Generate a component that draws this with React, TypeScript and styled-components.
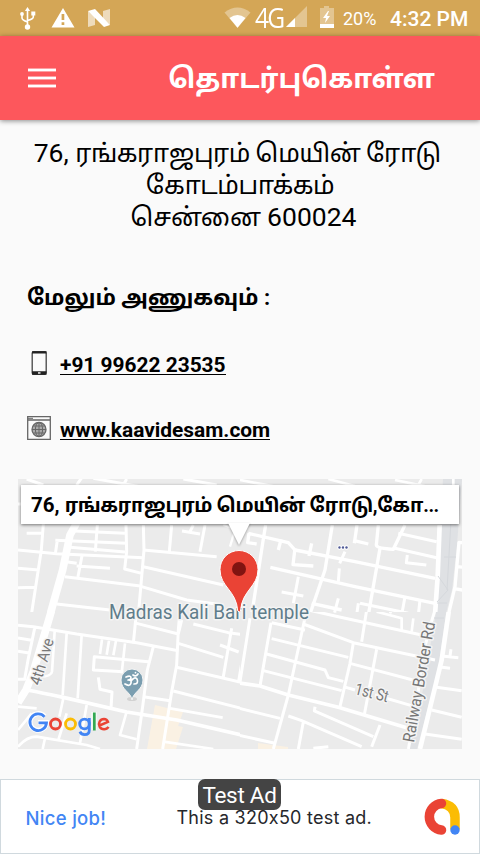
import React from "react";
import styled, { createGlobalStyle } from "styled-components";

const GlobalStyle = createGlobalStyle`
  * { box-sizing: border-box; }
  html, body { margin: 0; padding: 0; background: #fafafa; }
  body { font-family: Roboto, "Noto Sans Tamil", "Noto Sans", sans-serif; color: #000; overflow: hidden; }
`;

const Screen = styled.div`
  width: 480px;
  height: 854px;
  display: flex;
  flex-direction: column;
  background: #fafafa;
  overflow: hidden;
`;

const StatusBar = styled.header`
  flex: none;
  height: 36px;
  display: flex;
  align-items: center;
  background: #d4a656;
  color: #fff;
  line-height: 36px;
  white-space: nowrap;
`;

const StatusIcons = styled.svg<{ $w: number }>`
  flex: none;
  display: block;
  width: ${(p) => p.$w}px;
  height: 36px;
`;

const Spacer = styled.div`
  flex: 1;
`;

const Network = styled.span`
  width: 31px;
  font: 400 26.5px/36px "Open Sans", sans-serif;
  letter-spacing: -2px;
  transform: scaleX(0.93);
  transform-origin: left;
`;

const Battery = styled.span`
  width: 47px;
  font-size: 18px;
  padding-top: 2px;
`;

const Clock = styled.span`
  width: 90px;
  font-size: 21px;
  font-weight: 500;
  padding-top: 1px;
`;

const AppBar = styled.div`
  flex: none;
  height: 84px;
  padding: 0 45px 0 28px;
  display: flex;
  align-items: center;
  justify-content: space-between;
  background: #fd575c;
  box-shadow: 0 1px 5px rgba(0, 0, 0, 0.45);
`;

const MenuButton = styled.button`
  width: 28px;
  height: 20px;
  margin-top: -1px;
  padding: 0;
  border: 0;
  background: none;
  display: flex;
  flex-direction: column;
  justify-content: space-between;
`;

const MenuLine = styled.span`
  height: 4px;
  background: #fff;
  border: solid #fd9fa2;
  border-width: 1px 0;
`;

const Title = styled.h1`
  margin: 2px 0 0;
  font-size: 27.4px;
  line-height: 40px;
  font-weight: 700;
  color: #fff;
  white-space: nowrap;
`;

const Address = styled.address`
  flex: none;
  height: 99px;
  margin-top: 17px;
  font-style: normal;
  font-size: 26.5px;
  text-align: center;
`;

const AddressLine = styled.div<{ $shift: number }>`
  height: 32px;
  line-height: 32px;
  padding-left: ${(p) => p.$shift}px;
  white-space: nowrap;
`;

const Tamil = styled.span<{ $size: number }>`
  font-size: ${(p) => p.$size}px;
  line-height: 1;
  letter-spacing: -0.02em;
`;

const Heading = styled.h2`
  flex: none;
  margin: 44px 0 0 27px;
  height: 36px;
  font-size: 21.8px;
  line-height: 36px;
  font-weight: 700;
  white-space: nowrap;
`;

const Contacts = styled.div`
  flex: none;
  height: 163px;
  padding: 35px 0 0 27px;
  display: flex;
  flex-direction: column;
  gap: 41px;
`;

const ContactRow = styled.div`
  height: 24px;
  display: flex;
  gap: 9px;
`;

const ContactIcon = styled.svg`
  width: 24px;
  height: 24px;
`;

const ContactLink = styled.a`
  height: 24px;
  padding-top: 2px;
  font-size: 20.9px;
  line-height: 24px;
  font-weight: 700;
  color: #000;
  white-space: nowrap;
  border-bottom: 1px solid #000;
`;

const MapBox = styled.section`
  flex: none;
  position: relative;
  width: 444px;
  height: 270px;
  margin: 0 18px;
  background: #ebebeb;
`;

const MapDrawing = styled.svg`
  display: block;
  width: 444px;
  height: 270px;
`;

const InfoWindow = styled.div`
  position: absolute;
  left: 3px;
  top: 6px;
  width: 438px;
  height: 39px;
  padding: 1px 10px 0;
  background: #fff;
  box-shadow: 0 1px 3px rgba(0, 0, 0, 0.5);
  font-size: 20.5px;
  line-height: 39px;
  font-weight: 700;
  white-space: nowrap;
`;

const InfoArrow = styled.svg`
  position: absolute;
  left: 208px;
  top: 44px;
  width: 26px;
  height: 26px;
  filter: drop-shadow(0 1px 1px rgba(0, 0, 0, 0.35));
`;

const Ad = styled.footer`
  flex: none;
  position: relative;
  margin-top: 30px;
  height: 75px;
  padding-top: 2px;
  display: flex;
  align-items: center;
  border: 1.5px solid #d0d9de;
  background: #fff;
  white-space: nowrap;
`;

const AdHeadline = styled.span`
  width: 151px;
  padding-left: 24.5px;
  font: 500 18.5px/24px Inter, sans-serif;
  letter-spacing: 0.3px;
  color: #4285f4;
`;

const AdBody = styled.span`
  flex: 1;
  padding-left: 24.5px;
  font: 400 18px/24px Inter, sans-serif;
  letter-spacing: 0.25px;
  color: #26272b;
`;

const AdLogo = styled.svg`
  width: 40px;
  height: 40px;
  margin: -1px 18px 0 0;
`;

const AdTag = styled.span`
  position: absolute;
  left: 197px;
  top: -1px;
  width: 83px;
  height: 31px;
  border-radius: 7px;
  background: #444;
  color: #fff;
  font: 400 22.5px/33px Roboto, sans-serif;
  letter-spacing: -0.3px;
  text-align: center;
`;

/* Each sheet is drawn in a 705 x 435 space, three units to the pixel. */
const northWest = [
  ["M50 27L100 45M200 45L216 22M250 25L390 50M340 45L350 27M520 27L620 45M24 102H34", 9],
  ["M24 240L140 251L400 263M50 190H95M100 162L94 240L64 435M24 295L86 300M24 353L78 352", 9],
  ["M192 183L345 190M136 211L350 220M142 211L136 251M180 232L345 246", 9],
  ["M262 165L256 245M348 165L350 245L344 297L395 310M400 165L402 240L385 435", 9],
  ["M168 275L200 280M217 252L204 320M200 288L300 295M165 320L385 347L530 390L640 405", 9],
  ["M400 240L620 260M400 290L640 345M485 165L478 245M585 165L570 245M516 183L570 192M540 185L550 165M140 402L300 420", 9],
  ["M205 150L180 195L158 300L120 435", 23],
  ["M640 165L705 185M672 190L660 230", 7],
] as const;

const northEast = [
  ["M0 27L120 50M280 27L440 70M480 30L600 55M560 27L550 45M655 27V50", 8],
  ["M92 165L86 200L50 435M40 190L160 218L180 240L360 275L600 325M42 190L38 218L65 222", 10],
  ["M130 240L138 208M230 220L222 258M180 235L174 284L235 288M106 292L360 350L600 400", 10],
  ["M292 165L270 300L224 435M366 165L358 220M358 212L400 222M430 165L424 225Q425 235 475 238L510 165M435 235L400 435", 10],
  ["M330 245L314 280M313 295L310 335M490 190L605 215M480 235L605 263M517 255L514 278L574 285", 9],
  ["M140 366L205 378M190 320L175 400M310 385L298 430M375 400L520 430M370 400L365 435M510 380L500 435M555 390L550 435", 9],
  ["M614 165L608 320L600 435", 14],
  ["M705 220L672 217L660 350L640 435M665 290L705 294M230 400L320 420M655 355L705 365", 10],
] as const;

const southWest = [
  ["M24 46L70 50L200 72L380 98L505 122M24 84L65 91M24 124L62 130M75 50L55 145L44 208H24", 9],
  ["M134 64L126 185Q124 200 90 200M170 70L158 255M215 75L203 265M276 88L270 132M297 92L290 134M318 92L310 136M345 100L335 190", 8],
  ["M340 185L250 180L253 140L415 155M265 202L270 238L306 246L303 295M430 110L412 180L398 290L380 417", 9],
  ["M510 0L505 60L500 165L485 245L458 417M370 100L380 0M380 40L505 72L515 30M505 100L640 142M550 42L655 68L705 75", 9],
  ["M665 55L640 200M630 105L686 126M500 172L690 216L705 222M705 100L685 220M490 243L705 298M400 260L480 272", 9],
  ["M160 265L148 320M230 285L210 400M350 305L330 375L380 388M480 295L638 323M24 290L80 295M24 360L65 310M24 410Q50 380 80 380L230 405L270 417M170 310L145 390M105 385L98 417M460 395L610 417", 8],
  ["M50 240Q80 245 160 262L350 306L500 330L705 377", 11],
  ["M125 0L97 95L70 185L48 240L24 278", 23],
] as const;

const southEast = [
  ["M0 217L75 228L160 255L310 292L520 355", 11],
  ["M0 292L135 325M0 373L120 400M108 38L75 228M45 25L15 215M0 125H12", 9],
  ["M110 38L210 60M205 42L355 98L600 150M215 0L160 255L115 417M110 86L340 142M95 132L270 180L280 203L325 214M85 182L320 242", 9],
  ["M220 0L310 20L560 75M355 98L345 160L315 290M345 160L545 213M395 0L380 95M425 118L388 314M325 230L360 240M420 255L540 290", 9],
  ["M425 5L500 25V60M535 25L530 65M300 0V8M470 0L465 10", 8],
  ["M160 318L200 332L380 410M240 290L238 303L415 380M205 335L190 417M435 345L410 410M235 415L280 410", 9],
  ["M600 0L585 50L560 150L545 290L520 417", 9],
  ["M642 0L620 150L555 417", 14],
  ["M620 138L670 143M648 118L644 145M610 170L645 175M605 232L680 242M590 300L680 322M570 372L680 388", 9],
] as const;

type Roads = readonly (readonly [string, number])[];

const RoadSheet = ({ x, y, roads, clip }: { x: number; y: number; roads: Roads; clip: string }) => (
  <g clipPath={`url(#${clip})`}>
    <g transform={`translate(${x} ${y}) scale(.33333)`} fill="none" stroke="#fff" strokeLinejoin="round">
      {roads.map(([d, w], i) => (
        <path key={i} d={d} strokeWidth={w} />
      ))}
    </g>
  </g>
);

const MapView = () => (
  <MapDrawing viewBox="18 479 444 270">
    <defs>
      <clipPath id="nw"><path d="M18 479h222v133H18z" /></clipPath>
      <clipPath id="ne"><path d="M240 479h222v133H240z" /></clipPath>
      <clipPath id="sw"><path d="M18 612h222v137H18z" /></clipPath>
      <clipPath id="se"><path d="M240 612h222v137H240z" /></clipPath>
    </defs>
    <path fill="#dfe1e4" d="M443 479h19L457 545 452 590 446 613 438 670 417 749H407L423 690 436 612z" />
    <path fill="#faf1e3" d="M155 705l28 7-13 37h-23zM169 724l14 3-7 22h-14zM258 743l30 4v2h-30z" />
    <RoadSheet x={10} y={470} roads={northWest} clip="nw" />
    <RoadSheet x={235} y={470} roads={northEast} clip="ne" />
    <RoadSheet x={10} y={610} roads={southWest} clip="sw" />
    <RoadSheet x={235} y={610} roads={southEast} clip="se" />
    <path fill="none" stroke="#d5d8dc" d="M451 520L447 590M444 557h12M438 576l10 14-11 12M437 603h10M434 618h10" />
    <g fontFamily="Roboto, sans-serif" stroke="#f4f4f4" strokeWidth="3" paintOrder="stroke" strokeLinejoin="round">
      <text x="109" y="619" fontSize="19.500" fill="#607d8b" textLength="200" lengthAdjust="spacingAndGlyphs">Madras Kali Bari temple</text>
      <g fill="#777">
        <text transform="translate(40 686) rotate(-73)" fontSize="16" textLength="48" lengthAdjust="spacingAndGlyphs">4th Ave</text>
        <text transform="translate(354 694) rotate(14)" fontSize="16.500" textLength="34" lengthAdjust="spacingAndGlyphs">1st St</text>
        <text transform="translate(414 743) rotate(-80)" fontSize="16.500" textLength="122" lengthAdjust="spacingAndGlyphs">Railway Border Rd</text>
      </g>
    </g>
    <g fill="#4f5a96" stroke="#fff" strokeWidth="2" paintOrder="stroke">
      <circle cx="339.500" cy="547.500" r="1.200" />
      <circle cx="343" cy="547.500" r="1.200" />
      <circle cx="346.500" cy="547.500" r="1.200" />
    </g>
    <ellipse cx="132" cy="699" rx="5" ry="2" fill="#d2d2d2" />
    <path fill="#7b9eb0" stroke="#f5f5f5" d="M132 700c-1-8-11-10-11-20a11 11 0 0 1 22 0c0 10-10 12-11 20z" />
    <g fill="none" stroke="#fff" strokeWidth="1.700" strokeLinecap="round" strokeLinejoin="round">
      <path d="M126 677q5-2 5 1 0 2-3 2 4 0 3 3-1 4-6 1M131 681q4-5 6-2 2 5-3 5M133 675q3 2 5-1M135.500 672.500v.2" />
    </g>
    <path fill="#ea4335" stroke="#fff" strokeWidth="1" d="M237.800 611c-1.500-21-17.800-24-17.800-41.500a19 19 0 0 1 38 0c0 17.500-16 20.500-17.500 41.500q-1.300 2-2.700 0z" />
    <circle cx="239" cy="569" r="7" fill="#811411" />
    <g fill="none">
      <path stroke="#fff" strokeWidth="5" d="M44.500 716.500a8.300 8.300 0 1 0 2 6H38M94 712v18" />
      <g strokeWidth="2.800">
        <path stroke="#4285f4" d="M44.500 716.800a8.300 8.300 0 1 0 2 6H38.500" />
        <circle cx="55.500" cy="724" r="5" stroke="#ea4335" />
        <circle cx="70.500" cy="724" r="5" stroke="#fbbc05" />
        <circle cx="84.500" cy="724" r="4.800" stroke="#4285f4" />
        <path stroke="#4285f4" d="M89.300 718v12q0 4.600-4.600 4.600-3.500 0-4.800-3" />
        <path stroke="#34a853" d="M94.300 712.500v18" />
        <path stroke="#ea4335" strokeWidth="2.500" d="M99.500 725.500l8.500-3.600q-1-3-4-3a5.200 5.200 0 1 0 4.500 8" />
      </g>
    </g>
  </MapDrawing>
);

export default function App() {
  return (
    <>
      <GlobalStyle />
      <Screen>
        <StatusBar>
          <StatusIcons $w={120} viewBox="0 0 120 36" fill="#fff">
            <path d="M27.500 7l2.600 4h-5.200z" />
            <circle cx="27.500" cy="27" r="2.700" />
            <circle cx="22" cy="14" r="1.900" />
            <path d="M31.300 11.500h4v4h-4z" />
            <path fill="none" stroke="#fff" strokeWidth="1.600" d="M27.500 9v17M22 14v4q0 2 5.500 4M33.300 14v3q0 2-5.800 3.500" />
            <path fillRule="evenodd" d="M63 8l11.500 19.500H51.500zM61.600 14v6h2.700v-6zm0 8.300V25h2.700v-2.700z" />
            <path opacity=".6" d="M88 11l7 6v8l-7 2zM103 11l7-2v16l-7-6z" />
            <path d="M88 11l7-2 15 16-6 2z" />
          </StatusIcons>
          <Spacer />
          <StatusIcons $w={31} viewBox="224 0 31 36" fill="#fff">
            <path opacity=".35" d="M224.500 12.500q13-10 26 0L237.500 28z" />
            <path d="M229.500 18q8-6 16 0l-8 9.800z" />
          </StatusIcons>
          <Network>4G</Network>
          <StatusIcons $w={57} viewBox="286 0 57 36" fill="#fff">
            <path opacity=".35" d="M307 6v21h-21z" />
            <path d="M295 18v9h-9z" />
            <path opacity=".35" d="M324 6h5v2h5v16h-14V8h4z" />
            <path d="M320 24h14v4h-14zM328 11l-5 7h3l-1 5 5-7h-3l2-5z" />
          </StatusIcons>
          <Battery>20%</Battery>
          <Clock>4:32 PM</Clock>
        </StatusBar>
        <AppBar>
          <MenuButton aria-label="Menu">
            <MenuLine />
            <MenuLine />
            <MenuLine />
          </MenuButton>
          <Title>தொடர்புகொள்ள</Title>
        </AppBar>
        <Address>
          <AddressLine $shift={0}>
            76, <Tamil $size={25.2}>ரங்கராஜபுரம் மெயின் ரோடு&nbsp;</Tamil>
          </AddressLine>
          <AddressLine $shift={0}>
            <Tamil $size={25.2}>கோடம்பாக்கம்</Tamil>
          </AddressLine>
          <AddressLine $shift={7}>
            <Tamil $size={25.2}>சென்னை</Tamil> 600024
          </AddressLine>
        </Address>
        <Heading>மேலும் அணுகவும் :</Heading>
        <Contacts>
          <ContactRow>
            <ContactIcon viewBox="0 0 24 24">
              <rect x="5.200" y=".7" width="14" height="22.600" rx="1.500" fill="#fafafa" stroke="#444" strokeWidth="1.300" />
              <path fill="#222" d="M5 .3h14.500v2.200H5zM5 20.200h14.500v3.500H5z" />
              <path fill="#eee" d="M11 21.200h2.500v1.500H11z" />
            </ContactIcon>
            <ContactLink>+91 99622 23535</ContactLink>
          </ContactRow>
          <ContactRow>
            <ContactIcon viewBox="0 0 24 24" fill="none" stroke="#666">
              <path d="M.7.7h22.600v22.600H.7zM1 4h22" strokeWidth="1.300" />
              <path d="M1 2.300h5" />
              <circle cx="12" cy="13.500" r="7" fill="#aaa" strokeWidth="1.300" />
              <path d="M5 13.500h14M12 6.500v14M6.500 10h11M6.500 17h11" />
              <ellipse cx="12" cy="13.500" rx="3.600" ry="7" />
            </ContactIcon>
            <ContactLink>www.kaavidesam.com</ContactLink>
          </ContactRow>
        </Contacts>
        <MapBox>
          <InfoWindow>
            76, <Tamil $size={19.4}>ரங்கராஜபுரம் மெயின் ரோடு,கோ...</Tamil>
          </InfoWindow>
          <InfoArrow viewBox="0 0 26 26">
            <path fill="#fff" d="M2 0h22L13 22z" />
          </InfoArrow>
          <MapView />
        </MapBox>
        <Ad>
          <AdHeadline>Nice job!</AdHeadline>
          <AdBody>This a 320x50 test ad.</AdBody>
          <AdLogo viewBox="422 797 40 40" fill="none" strokeWidth="9.500" strokeLinecap="round">
            <path stroke="#fbbc04" strokeLinecap="butt" d="M442.500 803.500q13.500 2 13.500 14v12" />
            <path stroke="#ea4335" d="M442.500 803.500a13.300 13.300 0 0 0 0 26.500" />
            <circle cx="456" cy="830" r="4.700" fill="#4285f4" />
          </AdLogo>
          <AdTag>Test Ad</AdTag>
        </Ad>
      </Screen>
    </>
  );
}
